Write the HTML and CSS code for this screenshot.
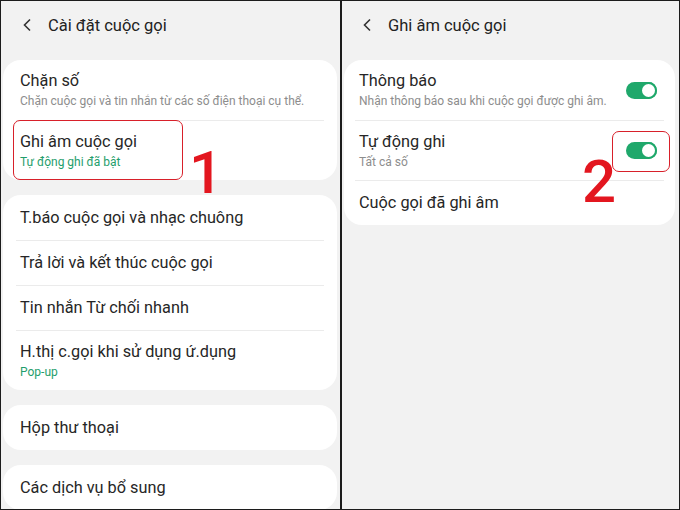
FILE: index.html
```html
<!DOCTYPE html>
<html lang="vi">
<head>
  <meta charset="UTF-8" />
  <meta name="viewport" content="width=device-width, initial-scale=1.0" />
  <title>Ghi âm cuộc gọi</title>
  <link rel="stylesheet" href="styles.css">
</head>
<body>
  <div class="frame">
    <div class="screen left">
      <div class="header">
        <span class="back"><svg width="10" height="14" viewBox="0 0 10 14"><path d="M8 1.5 L2.5 7 L8 12.5" fill="none" stroke="#333" stroke-width="1.6"/></svg></span>
        <span class="title">Cài đặt cuộc gọi</span>
      </div>

      <div class="card">
        <div class="row tall">
          <div class="label">Chặn số</div>
          <div class="sub">Chặn cuộc gọi và tin nhắn từ các số điện thoại cụ thể.</div>
        </div>
        <div class="row tall">
          <div class="label">Ghi âm cuộc gọi</div>
          <div class="sub green">Tự động ghi đã bật</div>
        </div>
        <div class="mark box1"></div>
        <div class="num num1">1</div>
      </div>

      <div class="card">
        <div class="row"><div class="label">T.báo cuộc gọi và nhạc chuông</div></div>
        <div class="row"><div class="label">Trả lời và kết thúc cuộc gọi</div></div>
        <div class="row"><div class="label">Tin nhắn Từ chối nhanh</div></div>
        <div class="row tall">
          <div class="label">H.thị c.gọi khi sử dụng ứ.dụng</div>
          <div class="sub green">Pop-up</div>
        </div>
      </div>

      <div class="card">
        <div class="row"><div class="label">Hộp thư thoại</div></div>
      </div>

      <div class="card">
        <div class="row"><div class="label">Các dịch vụ bổ sung</div></div>
      </div>
    </div>

    <div class="screen right">
      <div class="header">
        <span class="back"><svg width="10" height="14" viewBox="0 0 10 14"><path d="M8 1.5 L2.5 7 L8 12.5" fill="none" stroke="#333" stroke-width="1.6"/></svg></span>
        <span class="title">Ghi âm cuộc gọi</span>
      </div>

      <div class="card">
        <div class="row tall switch-row">
          <div class="text">
            <div class="label">Thông báo</div>
            <div class="sub">Nhận thông báo sau khi cuộc gọi được ghi âm.</div>
          </div>
          <span class="toggle"><span class="knob"></span></span>
        </div>
        <div class="row tall switch-row">
          <div class="text">
            <div class="label">Tự động ghi</div>
            <div class="sub">Tất cả số</div>
          </div>
          <span class="toggle"><span class="knob"></span></span>
        </div>
        <div class="row"><div class="label">Cuộc gọi đã ghi âm</div></div>
        <div class="mark box2"></div>
        <div class="num num2">2</div>
      </div>
    </div>
  </div>
</body>
</html>
```

FILE: styles.css
```css
body { margin: 0; font-family: Roboto, "Noto Sans", Arial, sans-serif; background: #f2f2f2; }
.frame {
  width: 680px;
  height: 510px;
  box-sizing: border-box;
  border: 1px solid #1c1c1c;
  display: flex;
  overflow: hidden;
}
.screen { background: #f2f2f2; height: 100%; }
.left { width: 339px; padding: 0 3px 0 2px; box-sizing: border-box; }
.right { width: 337px; border-left: 2px solid #1c1c1c; padding: 0 2px 0 2px; box-sizing: border-box; }

.header { height: 59px; display: flex; align-items: center; padding-left: 19px; padding-bottom: 11px; box-sizing: border-box; }
.right .header { padding-left: 18px; }
.back { width: 26px; display: flex; align-items: center; }
.title { font-size: 16.5px; color: #222; }

.card {
  background: #fff;
  border-radius: 18px;
  margin-bottom: 15px;
  position: relative;
}
.row {
  margin: 0 13px;
  padding: 0 4px;
  height: 45px;
  box-sizing: border-box;
  display: flex;
  flex-direction: column;
  justify-content: center;
  border-top: 1px solid #ebebeb;
}
.row:first-child { border-top: none; }
.row.tall { height: 60px; }
.right .row { margin: 0 11px; }
.label { font-size: 16.3px; color: #262626; line-height: 20px; }
.sub { font-size: 12px; color: #8d8d8d; line-height: 16px; margin-top: 2px; }
.sub.green { color: #1f9e6c; }

.switch-row { flex-direction: row; align-items: center; justify-content: space-between; }
.toggle {
  position: relative;
  width: 31px;
  height: 17px;
  border-radius: 9px;
  background: #1fa86b;
  margin-right: 3px;
}
.knob {
  position: absolute;
  right: 0;
  top: 0;
  width: 17px;
  height: 17px;
  box-sizing: border-box;
  border-radius: 50%;
  border: 2px solid #1fa86b;
  background: #fff;
}

.mark { position: absolute; border: 1.5px solid #d8202a; border-radius: 7px; }
.box1 { left: 10px; top: 60px; width: 168px; height: 58px; }
.box2 { left: 268px; top: 71px; width: 56px; height: 39px; }
.num { position: absolute; color: #e3161f; font-family: Roboto, Arial, sans-serif; font-weight: 500; font-size: 60px; line-height: 1; }
.num1 { left: 186px; top: 83px; }
.num2 { left: 238px; top: 92px; }
```
